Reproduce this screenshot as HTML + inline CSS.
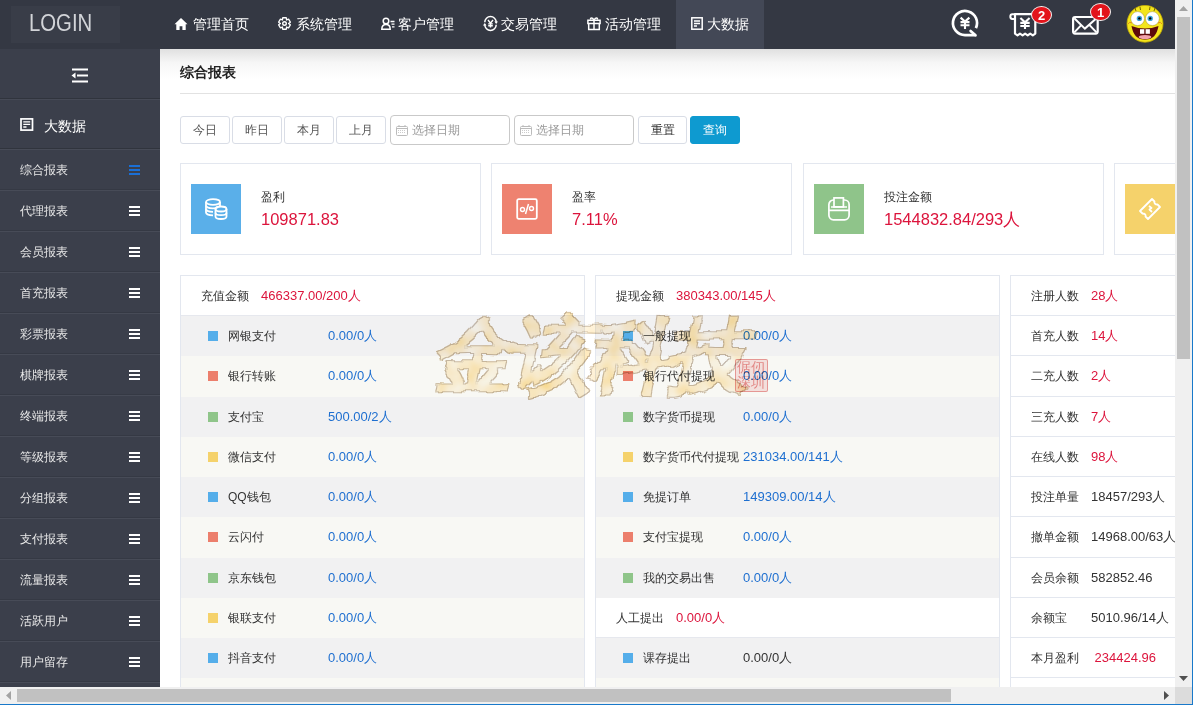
<!DOCTYPE html>
<html><head><meta charset="utf-8">
<style>
*{margin:0;padding:0;box-sizing:border-box}
html,body{width:1193px;height:705px;overflow:hidden;background:#fff;font-family:"Liberation Sans",sans-serif;color:#333}
.a{position:absolute}
#top{position:absolute;left:0;top:0;width:1175px;height:49px;background:#343843}
#logo{position:absolute;left:11px;top:6px;width:109px;height:37px;background:#393d48}
#logot{position:absolute;left:29px;top:8px;color:#d2d4d8;font-size:23.5px;line-height:30px;transform:scaleX(0.865);transform-origin:0 0;white-space:nowrap}
.nv{position:absolute;top:0;height:49px;color:#fff;font-size:14px;white-space:nowrap}
.nv svg{position:absolute;top:17px}
.nv span{position:absolute;top:15px;line-height:18px}
#act{position:absolute;left:676px;top:0;width:88px;height:49px;background:#434856}
#side{position:absolute;left:0;top:49px;width:160px;height:638px;background:#3b3f4b;overflow:hidden}
.mi{position:absolute;left:0;width:160px;height:41px;border-top:1px solid #474b57;border-bottom:1px solid #353944;color:#e8e8e8;font-size:12px}
.mi span{position:absolute;left:20px;top:12px;line-height:17px}
.hb{position:absolute;left:129px;top:15px;width:11px;height:10px;border-top:2px solid #fff;border-bottom:2px solid #fff}
.hb:after{content:"";position:absolute;left:0;top:2px;width:11px;height:2px;background:#fff}
.hb.blue{border-color:#1a6fd6}.hb.blue:after{background:#1a6fd6}
#shadow{position:absolute;left:160px;top:49px;width:1015px;height:30px;background:linear-gradient(#e0e0e0,#f6f6f6 45%,#fff)}
#title{position:absolute;left:180px;top:63px;font-size:14px;font-weight:bold;color:#222;line-height:18px}
#hr{position:absolute;left:180px;top:93px;width:995px;height:1px;background:#e2e2e2}
.btn{position:absolute;top:116px;height:28px;border:1px solid #d9dde6;border-radius:3px;background:#fff;font-size:12px;color:#555;text-align:center;line-height:26px}
.inp{position:absolute;top:115px;width:120px;height:30px;border:1px solid #c9c9c9;border-radius:4px;background:#fff;font-size:12px;color:#999;line-height:28px}
.inp span{position:absolute;left:21px;top:0}
.inp svg{position:absolute;left:5px;top:9px}
.card{position:absolute;top:163px;width:301px;height:92px;border:1px solid #e3e7ef;background:#fff}
.card .ic{position:absolute;left:10px;top:20px;width:50px;height:50px}
.card .lb{position:absolute;left:80px;top:25px;font-size:12px;color:#333;line-height:17px}
.card .vl{position:absolute;left:80px;top:44px;font-size:16.5px;color:#dc143c;line-height:22px}
.pn{position:absolute;top:275px;width:405px;height:420px;border:1px solid #e3e7ef;border-bottom:none;background:#fff;overflow:hidden}
.rw{position:absolute;left:0;width:403px;height:40.2px;font-size:12px;line-height:16px}
.rw .sq{position:absolute;left:27px;top:15px;width:10px;height:10px}
.rw .l{position:absolute;left:47px;top:12px;color:#333}
.rw .v{position:absolute;left:147px;top:12px;color:#1e6fd0;font-size:13px}
.hd .l{left:20px}.hd .v{left:80px;color:#dc143c}
.g{background:#f1f1f2}.y{background:#f8f8f4}
.p3 .rw{border-bottom:1px solid #e3e7ef}
.p3 .l{left:20px}.p3 .v{left:80px;color:#333}
#vsb{position:absolute;left:1175px;top:0;width:17px;height:687px;background:#f0f0f0}
#hsb{position:absolute;left:0;top:687px;width:1175px;height:17px;background:#f0f0f0}
#corner{position:absolute;left:1175px;top:687px;width:17px;height:17px;background:#dcdcdc}
#bR{position:absolute;left:1192px;top:0;width:1px;height:705px;background:#1979ca}
#bB{position:absolute;left:0;top:704px;width:1193px;height:1px;background:#1979ca}
.bd{position:absolute;height:18px;min-width:20px;border-radius:50%;background:#e3141b;border:1px solid #f4f4f4;color:#fff;font-family:"Liberation Sans",sans-serif;font-size:13px;font-weight:bold;text-align:center;line-height:18px}
</style></head><body>
<div id="top">
  <div id="logo"></div><div id="logot">LOGIN</div>
  <div id="act"></div>
  <div class="nv" style="left:174px">
    <svg width="14" height="14" viewBox="0 0 14 14"><path d="M7 1 L0.5 7.2 L2.3 7.2 L2.3 13 L5.6 13 L5.6 9.3 L8.4 9.3 L8.4 13 L11.7 13 L11.7 7.2 L13.5 7.2 Z" fill="#fff"/></svg>
    <span style="left:19px">管理首页</span></div>
  <div class="nv" style="left:278px">
    <svg width="13" height="13" viewBox="0 0 13 13"><circle cx="6.5" cy="6.5" r="1.8" fill="none" stroke="#fff" stroke-width="1.4"/><path d="M4.36 3.00 L4.73 0.77 L8.27 0.77 L8.64 3.00 L8.46 2.90 L10.58 2.10 L12.35 5.17 L10.60 6.61 L10.60 6.39 L12.35 7.83 L10.58 10.90 L8.46 10.10 L8.64 10.00 L8.27 12.23 L4.73 12.23 L4.36 10.00 L4.54 10.10 L2.42 10.90 L0.65 7.83 L2.40 6.39 L2.40 6.61 L0.65 5.17 L2.42 2.10 L4.54 2.90 Z" fill="none" stroke="#fff" stroke-width="1.3" stroke-linejoin="round"/></svg>
    <span style="left:18px">系统管理</span></div>
  <div class="nv" style="left:381px">
    <svg width="14" height="13" viewBox="0 0 14 13"><circle cx="5" cy="4" r="2.8" fill="none" stroke="#fff" stroke-width="1.5"/><path d="M0.8 12.3 C0.8 8.8 2.5 7.6 5 7.6 C7.5 7.6 9.2 8.8 9.2 12.3 Z" fill="none" stroke="#fff" stroke-width="1.5"/><path d="M9.5 4.5 H13.5 M10.5 7.2 H13.5 M11 9.9 H13.5" stroke="#fff" stroke-width="1.3"/></svg>
    <span style="left:17px">客户管理</span></div>
  <div class="nv" style="left:478px">
    <svg style="top:12px" width="24" height="24" viewBox="0 0 24 24"><path d="M6.8 10.3 A5.7 5.7 0 0 1 18.2 10.3 M18.2 12.7 A5.7 5.7 0 0 1 6.8 12.7" fill="none" stroke="#fff" stroke-width="1.5"/><path d="M16.4 9.4 L20 9.4 L18.2 12 Z M4.9 13.6 L8.5 13.6 L6.8 11 Z" fill="#fff"/><path d="M10 8 L12.5 11.2 L15 8 M12.5 11.2 V15.6 M10.2 11.9 H14.8 M10.2 13.8 H14.8" fill="none" stroke="#fff" stroke-width="1.4"/></svg>
    <span style="left:23px">交易管理</span></div>
  <div class="nv" style="left:587px">
    <svg width="14" height="14" viewBox="0 0 14 14"><path d="M0.9 3.2 H13.1 V6.4 H0.9 Z M1.7 6.4 V12.4 H12.3 V6.4 M7 3.2 V12.4" fill="none" stroke="#fff" stroke-width="1.5"/><path d="M7 3 C5.5 0.2 2.8 0.6 3.6 2.6 M7 3 C8.5 0.2 11.2 0.6 10.4 2.6" fill="none" stroke="#fff" stroke-width="1.3"/></svg>
    <span style="left:18px">活动管理</span></div>
  <div class="nv" style="left:691px">
    <svg width="12" height="13" viewBox="0 0 12 13"><rect x="0.8" y="0.8" width="10.4" height="11.4" fill="none" stroke="#fff" stroke-width="1.5"/><path d="M3 4 H9 M3 6.5 H9 M3 9 H6" stroke="#fff" stroke-width="1.4"/></svg>
    <span style="left:16px">大数据</span></div>
  <!-- right icons -->
  <svg class="a" style="left:945px;top:5px" width="40" height="36" viewBox="0 0 40 36"><path d="M30.9 23.1 A12.05 12.05 0 1 0 20 30.05 H30.2" fill="none" stroke="#fff" stroke-width="2.7"/><path d="M25.6 26 L30.5 30.3" fill="none" stroke="#fff" stroke-width="2.7" stroke-linecap="round"/><path d="M15.6 12.6 L20 16.6 L24.4 12.6 M20 16.6 V24 M15.5 17.1 H24.5 M15.5 20.3 H24.5" fill="none" stroke="#fff" stroke-width="2.1"/></svg>
  <svg class="a" style="left:1003px;top:3px" width="52" height="38" viewBox="0 0 52 38"><path d="M12 11.2 H32.3 V30.6 L29.8 32.3 L27.2 30.6 L24.7 32.3 L22.1 30.6 L19.6 32.3 L17 30.6 L14.5 32.3 L12 30.6 Z" fill="none" stroke="#fff" stroke-width="2.2" stroke-linejoin="round"/><path d="M12 11.2 H9.3 C6.8 11.2 6.6 15.6 9.3 15.9 H12" fill="none" stroke="#fff" stroke-width="2"/><path d="M17.4 15 L22 19.3 L26.6 15 M22 19.3 V26 M17.3 19.9 H26.7 M17.3 23 H26.7" fill="none" stroke="#fff" stroke-width="2.1"/></svg>
  <div class="bd" style="left:1031px;top:6px;width:21px;height:18px">2</div>
  <svg class="a" style="left:1066px;top:0px" width="50" height="40" viewBox="0 0 50 40"><rect x="7.1" y="17" width="24.6" height="16.6" rx="2" fill="none" stroke="#fff" stroke-width="2.2"/><path d="M8.3 18.3 L18.9 28.6 L30.5 18.3 M8.3 32.4 L15 25.4 M30.5 32.4 L23.8 25.4" fill="none" stroke="#fff" stroke-width="2"/></svg>
  <div class="bd" style="left:1090px;top:3px;width:21px;height:18px">1</div>
  <svg class="a" style="left:1126px;top:5px" width="38" height="38" viewBox="0 0 38 38"><ellipse cx="19" cy="18.8" rx="18" ry="18.4" fill="#f3e51c" stroke="#c9b000" stroke-width="0.8"/><path d="M9 3 L10 6 M14 2 L14.5 5 M24 2 L23.5 5 M29 3 L28 6" stroke="#6b5a00" stroke-width="0.9"/><ellipse cx="11.6" cy="13.6" rx="6.9" ry="7" fill="#fff" stroke="#8a7a20" stroke-width="0.4"/><ellipse cx="26.4" cy="13.6" rx="6.9" ry="7" fill="#fff" stroke="#8a7a20" stroke-width="0.4"/><circle cx="13.4" cy="13.4" r="2.7" fill="#3aa3dc"/><circle cx="24.2" cy="13.4" r="2.7" fill="#3aa3dc"/><circle cx="13.4" cy="13.4" r="1.2" fill="#000"/><circle cx="24.2" cy="13.4" r="1.2" fill="#000"/><path d="M5.5 21 Q19 26 32.5 21 Q30 35 19 34.5 Q8 35 5.5 21Z" fill="#5c0a0a"/><rect x="14" y="24.2" width="4.3" height="4.6" fill="#fff"/><rect x="19.6" y="24.2" width="4.3" height="4.6" fill="#fff"/><ellipse cx="19" cy="32" rx="6.4" ry="2" fill="#f2a3ab"/><path d="M2 19 Q3.5 16 6 18 M36 19 Q34.5 16 32 18" stroke="#e08a20" stroke-width="1" fill="none"/></svg>
</div>

<div id="side">
  <div class="a" style="left:0;top:0;width:160px;height:50px;border-bottom:1px solid #30343d"></div>
  <svg class="a" style="left:71px;top:19px" width="18" height="15" viewBox="0 0 18 15"><path d="M1 1.5 H17 M6 7.5 H17 M1 13.5 H17" stroke="#fff" stroke-width="2.2"/><path d="M0.5 7.5 L4.5 4.5 V10.5 Z" fill="#fff"/></svg>
  <div class="a" style="left:0;top:50px;width:160px;height:50px;border-top:1px solid #464a56;border-bottom:1px solid #30343d"></div>
  <svg class="a" style="left:20px;top:69px" width="14" height="13" viewBox="0 0 14 13"><rect x="1" y="0.9" width="11.5" height="11.2" fill="none" stroke="#fff" stroke-width="1.7"/><path d="M3.3 3.8 H10.2 M3.3 6.4 H10.2 M3.3 9 H6.5" stroke="#fff" stroke-width="1.3"/></svg>
  <div class="a" style="left:44px;top:67px;font-size:14px;color:#fff;line-height:20px">大数据</div>
</div>
<div id="menu"></div>
<div id="shadow"></div>
<div id="title">综合报表</div>
<div id="hr"></div>
<div class="btn" style="left:180px;width:50px">今日</div>
<div class="btn" style="left:232px;width:50px">昨日</div>
<div class="btn" style="left:284px;width:50px">本月</div>
<div class="btn" style="left:336px;width:50px">上月</div>
<div class="inp" style="left:390px"><svg width="12" height="11" viewBox="0 0 12 11"><rect x="0.5" y="1.5" width="11" height="9" rx="1" fill="none" stroke="#bbb"/><path d="M0.5 3.5 H11.5" stroke="#bbb"/><path d="M3 0 V2 M9 0 V2" stroke="#bbb"/><path d="M2 5.5 H10 M2 7.5 H10" stroke="#ccc" stroke-dasharray="1 1"/></svg><span>选择日期</span></div>
<div class="inp" style="left:514px"><svg width="12" height="11" viewBox="0 0 12 11"><rect x="0.5" y="1.5" width="11" height="9" rx="1" fill="none" stroke="#bbb"/><path d="M0.5 3.5 H11.5" stroke="#bbb"/><path d="M3 0 V2 M9 0 V2" stroke="#bbb"/><path d="M2 5.5 H10 M2 7.5 H10" stroke="#ccc" stroke-dasharray="1 1"/></svg><span>选择日期</span></div>
<div class="btn" style="left:638px;width:49px;color:#333">重置</div>
<div class="btn" style="left:690px;width:50px;background:#0e9ad0;border-color:#0e9ad0;color:#fff">查询</div>

<div class="mi" style="top:149px"><span>综合报表</span><div class="hb blue"></div></div>
<div class="mi" style="top:190px"><span>代理报表</span><div class="hb"></div></div>
<div class="mi" style="top:231px"><span>会员报表</span><div class="hb"></div></div>
<div class="mi" style="top:272px"><span>首充报表</span><div class="hb"></div></div>
<div class="mi" style="top:313px"><span>彩票报表</span><div class="hb"></div></div>
<div class="mi" style="top:354px"><span>棋牌报表</span><div class="hb"></div></div>
<div class="mi" style="top:395px"><span>终端报表</span><div class="hb"></div></div>
<div class="mi" style="top:436px"><span>等级报表</span><div class="hb"></div></div>
<div class="mi" style="top:477px"><span>分组报表</span><div class="hb"></div></div>
<div class="mi" style="top:518px"><span>支付报表</span><div class="hb"></div></div>
<div class="mi" style="top:559px"><span>流量报表</span><div class="hb"></div></div>
<div class="mi" style="top:600px"><span>活跃用户</span><div class="hb"></div></div>
<div class="mi" style="top:641px"><span>用户留存</span><div class="hb"></div></div>
<div class="mi" style="top:682px"></div>
<div class="card" style="left:180px"><div class="ic" style="background:#5aafe9"><svg class="a" style="left:13px;top:14px" width="24" height="22" viewBox="0 0 24 22"><g fill="none" stroke="#fff" stroke-width="1.8"><ellipse cx="9" cy="4" rx="7" ry="2.8"/><path d="M2 4 V14.5 C2 16 5 17.3 9 17.3"/><path d="M16 4 V8"/><path d="M2 7.5 C2 9 5 10.3 9 10.3 C11 10.3 13 10 14 9.3"/><path d="M2 11 C2 12.5 5 13.8 9 13.8"/><ellipse cx="17" cy="11" rx="5.5" ry="2.5"/><path d="M11.5 11 V18.5 C11.5 20 14 21 17 21 C20 21 22.5 20 22.5 18.5 V11"/><path d="M11.5 14.8 C11.5 16.2 14 17.2 17 17.2 C20 17.2 22.5 16.2 22.5 14.8"/></g></svg></div><div class="lb">盈利</div><div class="vl">109871.83</div></div>
<div class="card" style="left:491px"><div class="ic" style="background:#ee8270"><svg class="a" style="left:14px;top:14px" width="22" height="22" viewBox="0 0 22 22"><rect x="1.2" y="1.2" width="19.6" height="19.6" rx="1.5" fill="none" stroke="#fff" stroke-width="1.8"/><circle cx="6.5" cy="11.5" r="2" fill="none" stroke="#fff" stroke-width="1.4"/><circle cx="15.5" cy="10.5" r="2" fill="none" stroke="#fff" stroke-width="1.4"/><path d="M12.5 6 L9.5 16" stroke="#fff" stroke-width="1.5"/></svg></div><div class="lb">盈率</div><div class="vl">7.11%</div></div>
<div class="card" style="left:803px"><div class="ic" style="background:#8fc48a"><svg class="a" style="left:14px;top:13px" width="22" height="24" viewBox="0 0 22 24"><g stroke="#fff" stroke-width="1.7"><rect x="0.9" y="3" width="20.2" height="19.8" rx="4.5" fill="none"/><rect x="6" y="0.9" width="9.4" height="9" fill="#8fc48a"/><path d="M3 10 H19 M0.9 13.4 H21.1" fill="none"/></g></svg></div><div class="lb">投注金额</div><div class="vl">1544832.84/293人</div></div>
<div class="card" style="left:1114px"><div class="ic" style="background:#f5d26b"><svg class="a" style="left:12px;top:12px" width="26" height="26" viewBox="0 0 26 26"><g fill="none" stroke="#fff" stroke-width="1.8" stroke-linejoin="round"><path d="M3 15 L15 3 L17.5 5.5 C17 7 18 8.5 20.5 8.5 L23 11 L11 23 L8.5 20.5 C9 19 8 17.5 5.5 17.5 Z"/><path d="M12 10 L14.5 12 L12.5 13.5 L15 16"/></g></svg></div><div class="lb"></div><div class="vl"></div></div>
<div class="pn" style="left:180px"><div class="rw hd" style="top:0.00px;background:#fff;border-bottom:1px solid #e6e8ee"><span class="l">充值金额</span><span class="v">466337.00/200人</span></div><div class="rw g" style="top:40.22px"><div class="sq" style="background:#55aeea"></div><span class="l">网银支付</span><span class="v">0.00/0人</span></div><div class="rw y" style="top:80.44px"><div class="sq" style="background:#ec7f6c"></div><span class="l">银行转账</span><span class="v">0.00/0人</span></div><div class="rw g" style="top:120.66px"><div class="sq" style="background:#8fc58a"></div><span class="l">支付宝</span><span class="v">500.00/2人</span></div><div class="rw y" style="top:160.88px"><div class="sq" style="background:#f5d26b"></div><span class="l">微信支付</span><span class="v">0.00/0人</span></div><div class="rw g" style="top:201.10px"><div class="sq" style="background:#55aeea"></div><span class="l">QQ钱包</span><span class="v">0.00/0人</span></div><div class="rw y" style="top:241.32px"><div class="sq" style="background:#ec7f6c"></div><span class="l">云闪付</span><span class="v">0.00/0人</span></div><div class="rw g" style="top:281.54px"><div class="sq" style="background:#8fc58a"></div><span class="l">京东钱包</span><span class="v">0.00/0人</span></div><div class="rw y" style="top:321.76px"><div class="sq" style="background:#f5d26b"></div><span class="l">银联支付</span><span class="v">0.00/0人</span></div><div class="rw g" style="top:361.98px"><div class="sq" style="background:#55aeea"></div><span class="l">抖音支付</span><span class="v">0.00/0人</span></div><div class="rw y" style="top:402.20px"><div class="sq" style="background:#ec7f6c"></div><span class="l"></span><span class="v"></span></div></div>
<div class="pn" style="left:595px"><div class="rw hd" style="top:0.00px;background:#fff;border-bottom:1px solid #e6e8ee"><span class="l">提现金额</span><span class="v">380343.00/145人</span></div><div class="rw g" style="top:40.22px"><div class="sq" style="background:#55aeea"></div><span class="l">一般提现</span><span class="v">0.00/0人</span></div><div class="rw y" style="top:80.44px"><div class="sq" style="background:#ec7f6c"></div><span class="l">银行代付提现</span><span class="v">0.00/0人</span></div><div class="rw g" style="top:120.66px"><div class="sq" style="background:#8fc58a"></div><span class="l">数字货币提现</span><span class="v">0.00/0人</span></div><div class="rw y" style="top:160.88px"><div class="sq" style="background:#f5d26b"></div><span class="l">数字货币代付提现</span><span class="v">231034.00/141人</span></div><div class="rw g" style="top:201.10px"><div class="sq" style="background:#55aeea"></div><span class="l">免提订单</span><span class="v">149309.00/14人</span></div><div class="rw y" style="top:241.32px"><div class="sq" style="background:#ec7f6c"></div><span class="l">支付宝提现</span><span class="v">0.00/0人</span></div><div class="rw g" style="top:281.54px"><div class="sq" style="background:#8fc58a"></div><span class="l">我的交易出售</span><span class="v">0.00/0人</span></div><div class="rw hd" style="top:321.76px;background:#fff;border-bottom:1px solid #e6e8ee"><span class="l">人工提出</span><span class="v">0.00/0人</span></div><div class="rw g" style="top:361.98px"><div class="sq" style="background:#55aeea"></div><span class="l">课存提出</span><span class="v" style="color:#333">0.00/0人</span></div><div class="rw y" style="top:402.20px"><div class="sq" style="background:#ec7f6c"></div><span class="l"></span><span class="v"></span></div></div>
<div class="pn" style="left:1010px"><div class="rw" style="top:0.00px;border-bottom:1px solid #e3e7ef"><span class="l" style="left:20px">注册人数</span><span class="v" style="left:80px;color:#dc143c">28人</span></div><div class="rw" style="top:40.22px;border-bottom:1px solid #e3e7ef"><span class="l" style="left:20px">首充人数</span><span class="v" style="left:80px;color:#dc143c">14人</span></div><div class="rw" style="top:80.44px;border-bottom:1px solid #e3e7ef"><span class="l" style="left:20px">二充人数</span><span class="v" style="left:80px;color:#dc143c">2人</span></div><div class="rw" style="top:120.66px;border-bottom:1px solid #e3e7ef"><span class="l" style="left:20px">三充人数</span><span class="v" style="left:80px;color:#dc143c">7人</span></div><div class="rw" style="top:160.88px;border-bottom:1px solid #e3e7ef"><span class="l" style="left:20px">在线人数</span><span class="v" style="left:80px;color:#dc143c">98人</span></div><div class="rw" style="top:201.10px;border-bottom:1px solid #e3e7ef"><span class="l" style="left:20px">投注单量</span><span class="v" style="left:80px;color:#333">18457/293人</span></div><div class="rw" style="top:241.32px;border-bottom:1px solid #e3e7ef"><span class="l" style="left:20px">撤单金额</span><span class="v" style="left:80px;color:#333">14968.00/63人</span></div><div class="rw" style="top:281.54px;border-bottom:1px solid #e3e7ef"><span class="l" style="left:20px">会员余额</span><span class="v" style="left:80px;color:#333">582852.46</span></div><div class="rw" style="top:321.76px;border-bottom:1px solid #e3e7ef"><span class="l" style="left:20px">余额宝</span><span class="v" style="left:80px;color:#333">5010.96/14人</span></div><div class="rw" style="top:361.98px;border-bottom:1px solid #e3e7ef"><span class="l" style="left:20px">本月盈利</span><span class="v" style="left:80px;color:#dc143c">&nbsp;234424.96</span></div><div class="rw" style="top:402.20px;border-bottom:1px solid #e3e7ef"><span class="l" style="left:20px"></span><span class="v" style="left:80px;color:#333"></span></div></div>
<svg class="a" style="left:420px;top:296px;mix-blend-mode:multiply" width="360" height="110" viewBox="0 0 360 110">
<defs>
<filter id="rough" x="-10%" y="-10%" width="120%" height="120%">
<feTurbulence type="fractalNoise" baseFrequency="0.09" numOctaves="2" seed="3" result="n"/>
<feMorphology in="SourceGraphic" operator="dilate" radius="0.9" result="dil"/>
<feDisplacementMap in="dil" in2="n" scale="6" xChannelSelector="R" yChannelSelector="G" result="d"/>
<feMorphology in="d" operator="erode" radius="0.6" result="er"/>
<feComposite in="d" in2="er" operator="out" result="edge"/>
<feFlood flood-color="#8a6a50" flood-opacity="0.6"/>
<feComposite in2="edge" operator="in" result="edgec"/>
<feTurbulence type="fractalNoise" baseFrequency="0.05" numOctaves="2" seed="8" result="n2"/>
<feColorMatrix in="n2" type="matrix" values="0 0 0 0 0.99  0 0 0 -0.35 1.03  0 0 0 -0.9 1.05  0 0 0 0 1" result="tex"/>
<feComposite in="tex" in2="d" operator="in" result="fill"/>
<feMerge><feMergeNode in="fill"/><feMergeNode in="edgec"/></feMerge>
</filter>
</defs>
<g filter="url(#rough)" opacity="0.85">
<text x="8" y="88" font-family="Liberation Serif, serif" font-size="82" font-weight="900" fill="#000" transform="skewX(-12) translate(22,0)" letter-spacing="-4">金该科技</text>
</g>
</svg>
<div class="a" style="left:735px;top:359px;width:33px;height:33px;border-radius:2px;border:1.5px solid rgba(225,95,95,0.55);background:rgba(245,200,200,0.45);overflow:hidden;mix-blend-mode:multiply"><div style="position:absolute;left:1px;top:0px;width:30px;font-size:14px;line-height:15px;color:rgba(225,100,100,0.7);white-space:normal;word-break:break-all">倨仞深圳</div></div>

<div id="vsb"><svg class="a" style="left:4px;top:6px" width="9" height="5"><path d="M0 5 L4.5 0 L9 5Z" fill="#a3a3a3"/></svg><div class="a" style="left:2px;top:17px;width:13px;height:342px;background:#c1c1c1"></div><svg class="a" style="left:4px;top:676px" width="9" height="5"><path d="M0 0 L4.5 5 L9 0Z" fill="#505050"/></svg></div>
<div id="hsb"><svg class="a" style="left:6px;top:4px" width="5" height="9"><path d="M5 0 L0 4.5 L5 9Z" fill="#a3a3a3"/></svg><div class="a" style="left:17px;top:2px;width:934px;height:13px;background:#c1c1c1"></div><svg class="a" style="left:1164px;top:4px" width="5" height="9"><path d="M0 0 L5 4.5 L0 9Z" fill="#505050"/></svg></div>
<div id="corner"></div><div id="bR"></div><div id="bB"></div>
</body></html>
